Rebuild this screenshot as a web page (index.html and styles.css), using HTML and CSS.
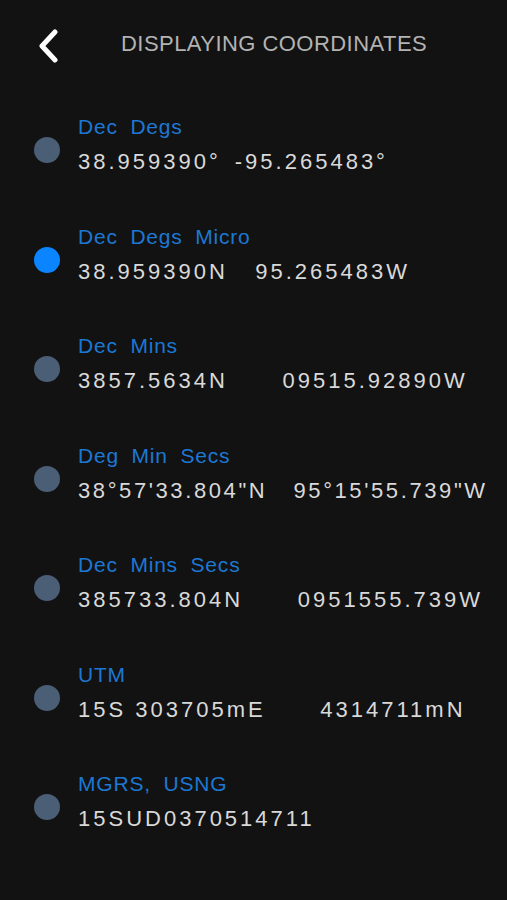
FILE: index.html
```html
<!DOCTYPE html>
<html lang="en">
<head>
    <meta charset="UTF-8">
    <meta name="viewport" content="width=device-width, initial-scale=1.0">
    <title>Displaying Coordinates</title>
    <link rel="stylesheet" href="styles.css">
</head>
<body>
    <div class="screen">
        <div class="header">
            <a class="back" href="#">
                <svg width="22" height="36" viewBox="0 0 22 36">
                    <path d="M17 5 L4 19 L17 33" fill="none" stroke="#fff" stroke-width="5" stroke-linecap="round" stroke-linejoin="round"/>
                </svg>
            </a>
            <h1>DISPLAYING COORDINATES</h1>
        </div>

        <ul class="formats">
            <li class="format">
                <span class="dot"></span>
                <div class="info">
                    <div class="label">Dec Degs</div>
                    <div class="value">38.959390°&ensp;-95.265483°</div>
                </div>
            </li>
            <li class="format selected">
                <span class="dot"></span>
                <div class="info">
                    <div class="label">Dec Degs Micro</div>
                    <div class="value">38.959390N   95.265483W</div>
                </div>
            </li>
            <li class="format">
                <span class="dot"></span>
                <div class="info">
                    <div class="label">Dec Mins</div>
                    <div class="value">3857.5634N      09515.92890W</div>
                </div>
            </li>
            <li class="format">
                <span class="dot"></span>
                <div class="info">
                    <div class="label">Deg Min Secs</div>
                    <div class="value tight">38°57'33.804"N   95°15'55.739"W</div>
                </div>
            </li>
            <li class="format">
                <span class="dot"></span>
                <div class="info">
                    <div class="label">Dec Mins Secs</div>
                    <div class="value">385733.804N      0951555.739W</div>
                </div>
            </li>
            <li class="format">
                <span class="dot"></span>
                <div class="info">
                    <div class="label">UTM</div>
                    <div class="value">15S 303705mE      4314711mN</div>
                </div>
            </li>
            <li class="format">
                <span class="dot"></span>
                <div class="info">
                    <div class="label">MGRS, USNG</div>
                    <div class="value">15SUD0370514711</div>
                </div>
            </li>
        </ul>
    </div>
</body>
</html>
```

FILE: styles.css
```css
body {
    margin: 0;
    background-color: #121212;
    font-family: "Liberation Sans", Arial, sans-serif;
    color: #e2e2e2;
}
.screen {
    width: 507px;
    height: 900px;
    overflow: hidden;
}
.header {
    display: flex;
    align-items: center;
    height: 88px;
    padding-left: 38px;
}
.back {
    display: flex;
    width: 22px;
    height: 36px;
    margin-top: 2px;
}
.header h1 {
    margin: 0 0 0 61px;
    font-size: 22px;
    font-weight: normal;
    letter-spacing: 0.45px;
    color: #b3b3b3;
}
.formats {
    list-style: none;
    margin: 0;
    padding: 23px 0 0 0;
}
.format {
    display: flex;
    align-items: center;
    height: 109.5px;
    padding-left: 34px;
    box-sizing: border-box;
    padding-bottom: 41.5px;
}
.dot {
    width: 26px;
    height: 26px;
    border-radius: 50%;
    background-color: #4a5e76;
    margin-top: 10px;
    flex-shrink: 0;
}
.format.selected .dot {
    background-color: #0a84ff;
}
.info {
    margin-left: 18px;
}
.label {
    font-size: 21px;
    line-height: 34px;
    letter-spacing: 0.8px;
    word-spacing: 6px;
    color: #1c78d2;
}
.value {
    font-size: 22px;
    line-height: 36px;
    letter-spacing: 3px;
    white-space: pre;
    color: #d9d9d9;
}
.value.tight {
    letter-spacing: 2.6px;
}
```
